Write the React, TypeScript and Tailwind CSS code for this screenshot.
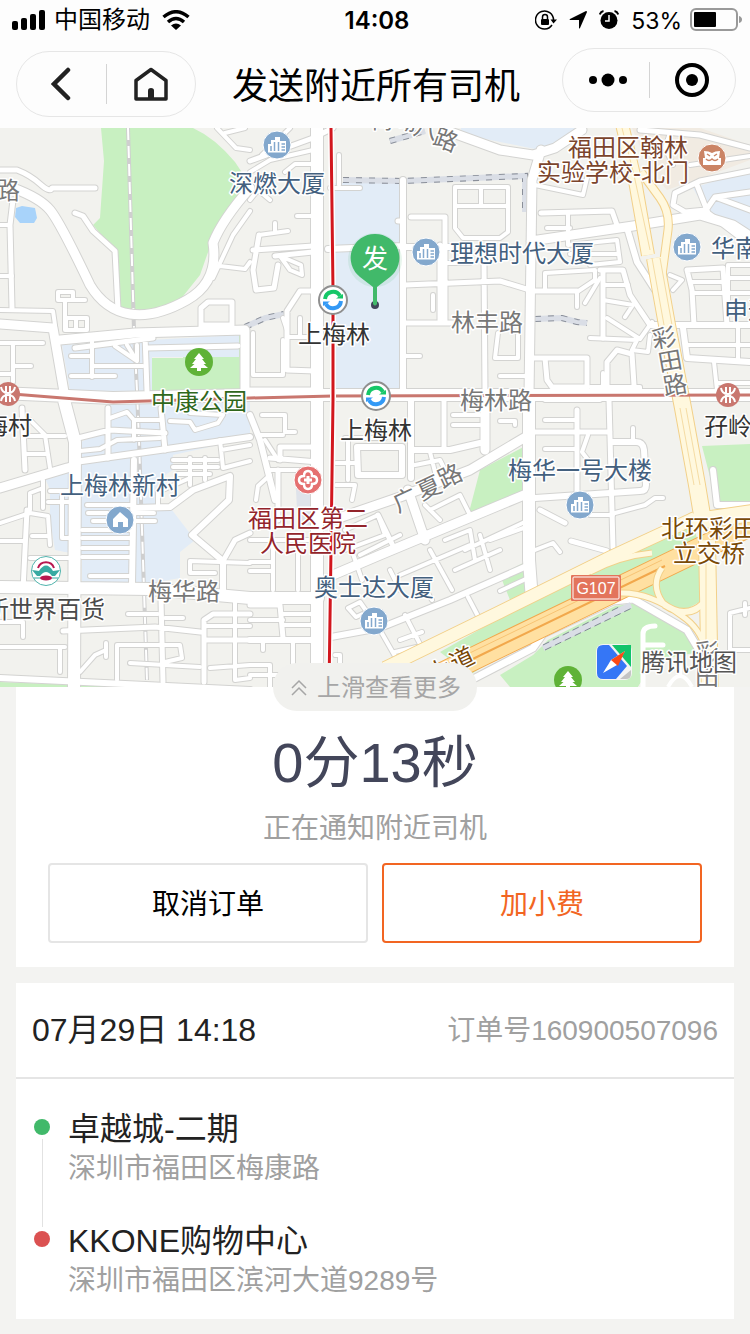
import { ReactNode } from "react";

const FONT = "font-['Liberation_Sans','Noto_Sans_CJK_SC',sans-serif]";

type Road = { w: number; d: string };

// Streets, grouped by width. Casing is drawn first, then the white fill on top.
const streets: Road[] = [
  {
    w: 3,
    d: `M0 225H10M0 276H12M0 310L53 311L55 325M58 292H73V300H58ZM65 300V330M68 300H85M66 328V318H87V330H66M76 318V330
    M0 343H43M13 343V382M13 366H31M0 374H13M71 356H92M92 340V377M71 376H115M92 366H143M115 346L137 361M127 345L137 361V345
    M217 128L236 148L250 150M225 133L245 128M213 278L233 235L250 211M220 266L245 269L250 262
    M250 172L270 160L313 150M262 155L290 128M285 172L295 164H313M339 155V185M330 188H360M297 216H313M250 200L258 190L270 200
    M275 223V232M259 235L288 231M280 256L290 270L302 275L301 265ZM253 333V375H283V340M287 337H312M283 318L287 330M300 318V335
    M30 420L45 435L50 468M25 454H48M25 436H65M80 451L100 449L117 440L160 438M110 418L127 412L134 420V440M170 421L190 422L195 430L218 423L223 415L190 413M134 420H160
    M173 460H218M173 467H218M178 474H210M190 458V485M205 458V480M220 440L223 468L250 461M221 450L250 445M158 505V492L190 478
    M87 505H132M88 513H154M93 521H155M82 530H132M82 538H132M82 548H132M82 557H132M90 576H132M43 480V508M30 510V493L43 488M50 491H70M48 502H70M62 495V538H70
    M0 523L30 513L48 516L50 545M32 536H48M0 541H25M30 558H70M250 563L190 561V573H215
    M128 614H158M165 618H183M206 626H250M80 672L95 655L106 650M106 643V657M117 680V645H180L182 658L165 662M130 663L200 667M0 622H23V637M0 647H65M60 647V672M210 668L250 665M235 600V680L250 678
    M262 415H285V432H295M258 435H283M265 440L278 460M256 500L258 486L270 475M268 470H315M273 545V590M298 550V590M250 562H272M250 571H272M250 540H315
    M283 614H312M283 625H312M250 620H283M293 640V680M263 640V650M250 665H270V688M250 675H318
    M345 438H385M348 438V480M336 463H355M336 485H355L352 500M415 465L440 460L450 480M430 452L437 480M453 415H480M453 425H480
    M345 530L378 515L385 535L345 550M350 545L362 580M360 555L400 535M430 510L460 495L470 515M425 505L440 520
    M430 550L452 590M445 540L470 530L475 560M455 570L500 550M465 550L529 520M480 535L490 570M400 575L470 545M390 570L400 590M420 580L432 600M490 540L529 526
    M348 608L360 602L367 612L356 617ZM380 630L400 665M400 640L422 632M395 652L425 645L480 620L468 597M405 615L422 648M335 655H340V690
    M445 263H470M420 356H403M433 295V310M455 187H508V232L500 238H463L455 228ZM455 206H508M481 187V206M498 333L495 358H518V335M500 376H525M545 400H600
    M535 185L583 195L587 178M547 228H570M568 213V245M568 245L617 240L620 262L590 265M570 254H618M545 291V273L595 270V280L577 292V307M600 278L585 303M590 338L637 340L632 350L648 352L650 335
    M603 300L633 305L625 317M603 285H628M607 318L640 339L652 322M603 373V395M590 387H640V395M690 282H725M692 293H725M730 265H750M730 278H750M730 293H750M728 265V300
    M685 345H750M738 325V360M714 362L717 390M717 383H750M670 275L682 280L673 290M673 165L665 148L670 133M690 165L750 156M545 420H577M545 449H577M588 435L582 452L592 465M633 428V442
    M615 513L645 505L655 498H663M590 515H613M535 550L553 543L560 552M500 591L528 578M730 650V613L750 608M730 650H750M745 603V615M500 421H515V425M702 575L688 590V605`,
  },
  {
    w: 4,
    d: `M0 170H17Q30 175 40 184T52 188H95M75 213L83 216L93 231L115 251L118 310M13 200L10 225L12 308M201 328V308L208 302H232V325H203M75 348L153 338M145 335L147 391M147 348L238 346
    M250 161L313 138L333 128M259 235L253 270L256 290L274 288L278 265M253 250L313 246M275 256L313 252M313 291H300L287 311V370L315 371M250 390H315M411 217H445V320M440 245V320M405 323H455M403 221H398M405 285L500 281L533 291H577
    M484 262L485 392M22 408L25 470M78 438L110 430L165 433M108 408V458M161 408L165 450M27 510L23 590M63 631L155 627L200 632M161 600L163 682M204 682V620L213 614H250M204 640H318
    M280 460V447H317M270 458L318 462M278 470V520M250 605H280L283 638M444 400V448M378 515L395 550M541 213L612 211L618 228M603 270V338M600 270H623L630 295L650 325M545 358H587V387H552L547 380ZM531 358H547M607 385V362L617 350L632 354L634 385
    M687 270L723 268L727 325M687 270L692 290L694 325M697 185L708 213M750 171L700 181L675 193L673 205L685 212L706 210L715 197L750 192M715 197L750 210M708 213L750 245M640 130L700 135L750 148M609 400L613 548M571 541L607 551L609 560M577 410V495M535 432H610
    M540 510L565 523M223 561L235 540L250 533`,
  },
  {
    w: 5,
    d: `M328 249L402 246M404 247H450M627 228L637 262L655 290M650 325H750M683 328L687 358L750 362M713 470L717 505H750M611 442H636Q643 442 644 450L646 485Q646 491 640 491L535 498M135 508L170 507L193 490L230 476L229 500L192 535L223 561V590M134 460L132 585M75 462L160 450L250 437
    M250 415L260 440L275 500M357 447H402V475H358ZM411 400V478M411 450H450L480 443M0 678L250 690M250 640H318M331 637L380 628L450 600L529 565M403 180V393`,
  },
  {
    w: 8,
    d: `M13 188Q40 198 50 210T90 285Q105 310 130 314T187 300T213 243Q222 220 250 188M60 340L135 333L245 330V395M0 324L53 328L64 392M0 488L67 468L75 466M445 130L500 150L533 155L555 148L582 130
    M541 150L532 180L529 395M531 241L633 226L700 215L733 225L750 236M333 520L400 497L470 470L529 435M408 490L425 540M485 395V450M333 575L380 555L440 530L500 505L529 493`,
  },
  { w: 11, d: "M64 400L75 442L74 690M0 587L150 589L250 598H318M0 393L113 398L250 395H750M529 395V560L532 600M317 128V690" },
];

const yellowRoads: Road[] = [
  { w: 5, d: "M662 568Q650 585 663 603Q685 620 703 603Q712 592 708 570M620 593Q650 592 682 616Q700 628 706 650M590 572Q620 556 652 553M664 605Q690 622 706 600" },
  { w: 7, d: "M641 172L660 198Q670 212 668 230L662 275" },
  { w: 12, d: "M622 124L634 175L648 255M385 668L500 612L613 556L695 518" },
  { w: 16, d: "M655 258L667 325L683 408L697 485L702 515M707 540L710 700M690 522L760 512" },
];

const COVERED_WALK = "M343 180L403 181L525 176V212M390 141L425 131M245 327L265 318L284 314M535 319L562 318L577 322L587 323";

function MapText({ x, y, fill, children, rotate = 0, size = 24 }: {
  x: number; y: number; fill: string; children: ReactNode; rotate?: number; size?: number;
}) {
  return (
    <text
      x={x}
      y={y}
      fill={fill}
      fontSize={size}
      textAnchor="middle"
      dominantBaseline="central"
      stroke="#fff"
      strokeWidth={3}
      strokeLinejoin="round"
      paintOrder="stroke"
      transform={rotate ? `rotate(${rotate} ${x} ${y})` : undefined}
    >
      {children}
    </text>
  );
}

function Building({ x, y }: { x: number; y: number }) {
  return (
    <g transform={`translate(${x} ${y})`}>
      <circle r={14} fill="#83a8cd" stroke="#fff" strokeWidth={1} />
      <path d="M-9 7.500V-1H-6V-5H-2V-8H3V-4H9V7.500Z" fill="#fff" />
      <path d="M-6 1V6M-2.500 -3V6M1.500 -3V6M4.500 -1H8M4.500 2H8M4.500 5H8" stroke="#83a8cd" strokeWidth={1.500} />
    </g>
  );
}

function Transfer({ x, y }: { x: number; y: number }) {
  return (
    <g transform={`translate(${x} ${y})`} fill="none">
      <circle r={14} fill="#fff" stroke="#8f8f8f" strokeWidth={2} />
      <path d="M-8 -1A8 8 0 0 1 7 -4" stroke="#16c768" strokeWidth={4} />
      <path d="M3 -1.500H10V-6Z" fill="#16c768" />
      <path d="M8 1A8 8 0 0 1 -7 4" stroke="#3399f5" strokeWidth={4} />
      <path d="M-3 1.500H-10V6Z" fill="#3399f5" />
    </g>
  );
}

function Metro({ x, y }: { x: number; y: number }) {
  return (
    <g transform={`translate(${x} ${y})`}>
      <circle r={12} fill="#c9776f" />
      <path d="M-2 -8V8M2 -8V8M-7 -7Q-6 -1 0 -1T7 -7M-7 7Q-6 1 0 1T7 7" fill="none" stroke="#fff" strokeWidth={2} />
    </g>
  );
}

function Park({ x, y }: { x: number; y: number }) {
  return (
    <g transform={`translate(${x} ${y})`}>
      <circle r={14} fill="#5fb237" />
      <path d="M0 -9L5 -3H3L7 2H4.500L9 6H2V9H-2V6H-9L-4.500 2H-7L-3 -3H-5Z" fill="#fff" />
    </g>
  );
}

function CityMap() {
  return (
    <svg viewBox="0 128 750 559" className="block w-full" role="img" aria-label="地图">
      <rect y={128} width={750} height={560} fill="#f2f2ee" />
      {/* water, blocks and parks */}
      <path fill="#a8d3fa" d="M16 208L22 206L35 208L37 218L34 223H20L15 217Z" />
      <path
        fill="#c8f0c1"
        d="M101 128L104 161L100 218L93 225L115 251L120 310L147 313L180 300L200 275L213 238L240 195L247 180L235 162Q215 138 193 128Z
        M152 358H183V350H213V356H239V335H245V395H152ZM480 470L529 444V493L467 520ZM702 446L750 444V504H717ZM0 682L133 687H0ZM500 575L525 562V598L512 605Z"
      />
      <path
        fill="#e2ecf7"
        d="M62 345L239 335V357H152V391H70ZM330 183H400L402 388H335ZM461 128H582L565 145L540 150L461 134ZM693 188L750 170V238L706 212Z
        M75 445L110 428V400H250V438L173 455V470L165 475L155 508L172 510L195 540L180 552V578L135 586H82V555L65 552L55 550L50 520V490L45 478L75 470Z"
      />
      <path fill="#f1ebe2" d="M632 128H700L750 145V160L710 175L667 190L650 170Z" />
      <path fill="#dfe3ea" d="M295 470H316V530H298Z" />

      {/* overground railway */}
      <path d="M128 128L134 330L137 391L139 440L147 680" fill="none" stroke="#cfcfcf" strokeWidth={4} />
      <path d="M128 128L134 330L137 391L139 440L147 680" fill="none" stroke="#fff" strokeWidth={2} strokeDasharray="12 6" />

      <path d={COVERED_WALK} fill="none" stroke="#dadee6" strokeWidth={6} />
      <path d={COVERED_WALK} fill="none" stroke="#8a8f99" strokeWidth={6} strokeDasharray="6 7" />
      <path d={COVERED_WALK} fill="none" stroke="#dadee6" strokeWidth={4} />

      <g fill="none" strokeLinecap="round" strokeLinejoin="round">
        {streets.map((r) => (
          <path key={r.w} d={r.d} stroke="#d3d3d1" strokeWidth={r.w + 3} />
        ))}
        {streets.map((r) => (
          <path key={r.w} d={r.d} stroke="#fff" strokeWidth={r.w + 1} />
        ))}
      </g>

      {/* highway interchange */}
      <path fill="#c8f0c1" d="M440 652L500 618L693 524L703 560V600L685 610L640 598L615 598L540 630L470 675Z" />
      <path fill="#c8f0c1" d="M500 675L533 655L548 640L615 606L637 603L685 630L700 655L655 660L638 687H510Z" />
      <path d="M655 660L700 652V687H638Z" fill="#f2f2ee" />
      <path d="M420 706L477 677L533 648L543 634L613 601L633 599L687 630L702 655" fill="none" stroke="#d3d3d1" strokeWidth={9} />
      <path d="M420 706L477 677L533 648L543 634L613 601L633 599L687 630L702 655" fill="none" stroke="#fff" strokeWidth={7} />
      <path d="M543 648L631 605" stroke="#dadee6" strokeWidth={6} />
      <path d="M543 645L621 606M545 650L632 608" stroke="#7f8794" strokeWidth={1} strokeDasharray="7 4" />
      <path d="M643 688V634Q643 626 655 626M645 645H663" fill="none" stroke="#fff" strokeWidth={5} strokeLinecap="round" />
      <path d="M668 687Q680 665 692 687M680 660V675" fill="none" stroke="#fff" strokeWidth={4} />

      <g fill="none" strokeLinejoin="round">
        <path d="M385 702L483 654L665 566L760 520" stroke="#f2a84c" strokeWidth={24} />
        <path d="M385 702L483 654L665 566L760 520" stroke="#ffe0a1" strokeWidth={22} />
        <path d="M385 702L483 654L665 566" stroke="#f2a84c" strokeWidth={2} />
        <path d="M382 696L480 648L662 560" stroke="#f7c374" strokeWidth={1} />
        {yellowRoads.map((r) => (
          <path key={r.w} d={r.d} stroke="#f2d089" strokeWidth={r.w + 2} />
        ))}
        {yellowRoads.map((r) => (
          <path key={r.w} d={r.d} stroke="#fff8de" strokeWidth={r.w} />
        ))}
        <path d="M622 128L634 175L650 250M652 258L664 325M660 258L672 325M680 408L694 485M686 408L700 485M706 560V688" stroke="#f5dca4" strokeWidth={1} />
      </g>

      {/* metro lines */}
      <path d="M0 393L113 402L250 398L333 396L750 395" fill="none" stroke="#c9776f" strokeWidth={3} />
      <path d="M331 128L333 290L333 400L331 550L329 687" fill="none" stroke="#fff" strokeWidth={6} />
      <path d="M331 128L333 290L333 400L331 550L329 687" fill="none" stroke="#d2171e" strokeWidth={3} />

      <g className={FONT}>
        <MapText x={8} y={190} fill="#777">路</MapText>
        <MapText x={277} y={183} fill="#43607e">深燃大厦</MapText>
        <MapText x={382} y={119} fill="#777">梅</MapText>
        <MapText x={405} y={121} fill="#777" rotate={8}>坳</MapText>
        <MapText x={426} y={129} fill="#777" rotate={14}>八</MapText>
        <MapText x={446} y={140} fill="#777" rotate={20}>路</MapText>
        <MapText x={628} y={147} fill="#7b442c">福田区翰林</MapText>
        <MapText x={613} y={172} fill="#7b442c">实验学校-北门</MapText>
        <MapText x={522} y={253} fill="#43607e">理想时代大厦</MapText>
        <MapText x={747} y={248} fill="#43607e">华南师</MapText>
        <MapText x={748} y={310} fill="#43607e">申通</MapText>
        <MapText x={334} y={334} fill="#333">上梅林</MapText>
        <MapText x={376} y={430} fill="#333">上梅林</MapText>
        <MapText x={487} y={322} fill="#777">林丰路</MapText>
        <MapText x={496} y={400} fill="#777">梅林路</MapText>
        <MapText x={199} y={401} fill="#2f671c">中康公园</MapText>
        <MapText x={8} y={425} fill="#333">梅村</MapText>
        <MapText x={728} y={426} fill="#333">孖岭</MapText>
        <MapText x={664} y={338} fill="#777" rotate={-10}>彩</MapText>
        <MapText x={670} y={361} fill="#777" rotate={-10}>田</MapText>
        <MapText x={675} y={385} fill="#777" rotate={-10}>路</MapText>
        <MapText x={120} y={485} fill="#43607e">上梅林新村</MapText>
        <MapText x={308} y={518} fill="#93242b">福田区第二</MapText>
        <MapText x={308} y={543} fill="#93242b">人民医院</MapText>
        <MapText x={405} y={500} fill="#777" rotate={-25}>广</MapText>
        <MapText x={429} y={488} fill="#777" rotate={-25}>夏</MapText>
        <MapText x={450} y={476} fill="#777" rotate={-25}>路</MapText>
        <MapText x={580} y={470} fill="#43607e">梅华一号大楼</MapText>
        <MapText x={709} y={528} fill="#7a4a08">北环彩田</MapText>
        <MapText x={709} y={553} fill="#7a4a08">立交桥</MapText>
        <MapText x={184} y={591} fill="#777">梅华路</MapText>
        <MapText x={45} y={609} fill="#4a4a4a">新世界百货</MapText>
        <MapText x={374} y={587} fill="#43607e">奥士达大厦</MapText>
        <MapText x={439} y={671} fill="#7a4a08" rotate={-25}>大</MapText>
        <MapText x={462} y={659} fill="#7a4a08" rotate={-25}>道</MapText>
        <MapText x={707} y={652} fill="#777">彩</MapText>
        <MapText x={707} y={676} fill="#777">田</MapText>
      </g>

      <Building x={277} y={145} />
      <Building x={426} y={252} />
      <Building x={687} y={247} />
      <Building x={580} y={505} />
      <Building x={374} y={621} />
      <Transfer x={333} y={300} />
      <Transfer x={376} y={396} />
      <Metro x={8} y={394} />
      <Metro x={728} y={395} />
      <Park x={199} y={362} />
      <Park x={568} y={680} />

      {/* school */}
      <g transform="translate(712 158)">
        <circle r={14} fill="#cb8465" stroke="#fff" strokeWidth={1} />
        <path d="M-8 -7Q-3 -7 0 -5Q3 -7 8 -7L7 0H9V7H-9V0H-7Z" fill="#fff" />
        <path d="M-5 -4L-2 -2M5 -4L2 -2M-6 1Q-3 4 0 1Q3 4 6 1" stroke="#cb8465" strokeWidth={1.500} fill="none" />
      </g>
      {/* housing estate */}
      <g transform="translate(120 520)">
        <circle r={14} fill="#83a8cd" stroke="#fff" strokeWidth={1} />
        <path d="M0 -8L8 -1V7H3V2H-2V7H-7V-1Z" fill="#fff" />
      </g>
      {/* hospital */}
      <g transform="translate(308 480)">
        <circle r={14} fill="#e57070" stroke="#fff" strokeWidth={1} />
        <path d="M-4 -4Q-4 -9 0 -9T4 -4Q9 -4 9 0T4 4Q4 9 0 9T-4 4Q-9 4 -9 0T-4 -4Z" fill="none" stroke="#fff" strokeWidth={2.500} />
        <path d="M0 -4V4M-4 0H4" stroke="#fff" strokeWidth={3} />
      </g>
      {/* department store */}
      <g transform="translate(46 571)">
        <circle r={14.500} fill="#fff" stroke="#4fb3ac" strokeWidth={1} />
        <path d="M-8 -3A8.500 8.500 0 0 1 8 -3" fill="none" stroke="#b8174f" strokeWidth={2} />
        <path d="M-14 -1L-7 0Q0 -11 7 0L14 -1L9 5H6Q0 -3 -6 5H-9Z" fill="#38aaa2" />
        <ellipse cy={7} rx={6} ry={2.500} fill="#b8174f" />
        <path d="M-12 7H-6M6 7H12" stroke="#38aaa2" />
      </g>

      <g transform="translate(571 575)">
        <rect width={50} height={26} rx={1} fill="#e3745b" />
        <rect x={2} y={2} width={46} height={22} rx={1} fill="none" stroke="#fff" />
        <text x={25} y={13} fill="#fff" fontSize={16} textAnchor="middle" dominantBaseline="central" className={FONT}>G107</text>
      </g>

      {/* map provider */}
      <g transform="translate(596 644)">
        <rect width={36} height={36} rx={7} fill="#f4f4f4" />
        <path d="M7 1H13L31 22L20 35H7Q1 35 1 29V7Q1 1 7 1Z" fill="#3576f6" />
        <path d="M16 1H35V23Z" fill="#12c46b" />
        <path d="M35 26V30Q35 35 30 35H24Z" fill="#c4c4c4" />
        <path d="M29 7L15 16L7 29L21 21Z" fill="#fff" />
        <path d="M29 7L15 16L22 22Z" fill="#fb4a16" />
      </g>
      <g className={FONT}>
        <MapText x={689} y={662} fill="#555">腾讯地图</MapText>
      </g>

      {/* pickup pin */}
      <circle cx={375} cy={305} r={4} fill="#3f4459" />
      <circle cx={375} cy={260} r={27} fill="#41b96a" opacity={0.120} />
      <path d="M375 234A24 24 0 0 1 390 277L377 287V304Q375 307 373 304V287L360 277A24 24 0 0 1 375 234Z" fill="#41b96a" />
      <text x={375} y={259} fill="#fff" fontSize={26} textAnchor="middle" dominantBaseline="central" className={FONT}>发</text>
    </svg>
  );
}

function StatusBar() {
  return (
    <div className="grid h-10 grid-cols-[1fr_auto_1fr] items-center pr-2 pl-3 text-2xl text-black">
      <div className="flex items-center gap-2">
        <svg viewBox="0 0 34 20" className="h-5 w-[34px]" aria-hidden="true">
          <rect y="11" width="6" height="9" rx="2" />
          <rect x="9" y="8" width="6" height="12" rx="2" />
          <rect x="18" y="4" width="6" height="16" rx="2" />
          <rect x="27" width="6" height="20" rx="2" />
        </svg>
        <span>中国移动</span>
        <svg viewBox="0 0 28 20" className="ml-1 h-5 w-7" fill="none" stroke="currentColor" strokeWidth="3.500" aria-hidden="true">
          <path d="M1.500 7Q14 -3.500 26.500 7M6 12Q14 5 22 12" />
          <path d="M9 15.500Q14 11.500 19 15.500L14 20Z" fill="currentColor" stroke="none" />
        </svg>
      </div>
      <span className="pt-0.5 font-['Inter',sans-serif] font-semibold">14:08</span>
      <div className="flex items-center justify-end">
        <svg viewBox="0 0 22 20" className="mr-3 h-5 w-[22px]" fill="none" stroke="currentColor" strokeWidth="1.500" aria-hidden="true">
          <path d="M17 15A9 9 0 1 1 18.500 10" />
          <path d="M15.500 9.500H22L18.500 13.500Z" fill="currentColor" stroke="none" />
          <rect x="6" y="9" width="8" height="6" rx="1" fill="currentColor" stroke="none" />
          <path d="M7.500 9V7A2.500 2.500 0 0 1 12.500 7V9" />
        </svg>
        <svg viewBox="0 0 18 18" className="mr-3 size-[18px]" aria-hidden="true">
          <path d="M17 0Q18 0 18 1L11 17Q10 18 10 17V9H1Q0 8.500 1 8Z" />
        </svg>
        <svg viewBox="0 0 20 20" className="mr-3 size-5" aria-hidden="true">
          <circle cx="10" cy="10.500" r="8.500" />
          <path d="M10 5V11H6" fill="none" stroke="#fff" strokeWidth="1.500" />
          <path d="M.8 4.500Q1.500 1.500 4.500 1M19.200 4.500Q18.500 1.500 15.500 1" fill="none" stroke="currentColor" strokeWidth="2" />
        </svg>
        <span className="mr-2 pt-0.5 font-['Inter',sans-serif] text-[23px]">53%</span>
        <svg viewBox="0 0 52 24" className="h-6 w-[52px]" aria-hidden="true">
          <rect x="1" y="1" width="46" height="21" rx="5" fill="none" stroke="#999" strokeWidth="2" />
          <rect x="4" y="4" width="22" height="15" rx="1" />
          <path d="M49 8Q52 9 52 11.500T49 15Z" fill="#999" />
        </svg>
      </div>
    </div>
  );
}

function NavBar() {
  return (
    <header className="grid h-[88px] grid-cols-[1fr_auto_1fr] items-center pr-3.5 pl-4">
      <div className="flex h-[66px] w-[180px] items-center justify-self-start rounded-full border border-[#e6e6e6]">
        <button type="button" aria-label="返回" className="flex flex-1 justify-center">
          <svg viewBox="0 0 20 34" className="h-[34px] w-5" fill="none" stroke="#222" strokeWidth="4.500" strokeLinecap="round">
            <path d="M17 3L3 17L17 31" />
          </svg>
        </button>
        <span className="h-10 w-px bg-[#d4d4d4]" />
        <button type="button" aria-label="首页" className="flex flex-1 justify-center">
          <svg viewBox="0 0 34 34" className="size-[34px]" fill="none" stroke="#222" strokeWidth="3.500" strokeLinejoin="round">
            <path d="M2 13.500L17 2.500L32 13.500V32H2Z" />
            <path d="M14 32V23.500Q14 21 17 21T20 23.500V32Z" fill="#222" stroke="none" />
          </svg>
        </button>
      </div>
      <h1 className="pt-1.5 text-4xl text-black">发送附近所有司机</h1>
      <div className="justify-self-end pb-2">
        <div className="flex h-16 w-[174px] items-center rounded-full border border-[#e6e6e6]">
          <button type="button" aria-label="更多" className="flex flex-1 justify-center">
            <svg viewBox="0 0 38 14" className="ml-1 h-[14px] w-[38px]">
              <circle cx="4" cy="7" r="4" />
              <circle cx="19" cy="7" r="6.500" />
              <circle cx="34" cy="7" r="4" />
            </svg>
          </button>
          <span className="h-9 w-px bg-[#d4d4d4]" />
          <button type="button" aria-label="关闭" className="flex flex-1 justify-center">
            <svg viewBox="0 0 34 34" className="size-[34px]">
              <circle cx="17" cy="17" r="15" fill="none" stroke="#000" strokeWidth="4" />
              <circle cx="17" cy="17" r="6" />
            </svg>
          </button>
        </div>
      </div>
    </header>
  );
}

const stops = [
  { name: "卓越城-二期", address: "深圳市福田区梅康路", dot: "bg-[#41b96a]", top: "bg-transparent", bottom: "bg-[#e2e2e2]", pad: "pt-0.5 pb-[30px]" },
  { name: "KKONE购物中心", address: "深圳市福田区滨河大道9289号", dot: "bg-[#db5151]", top: "bg-[#e2e2e2]", bottom: "bg-transparent", pad: "pt-0.5" },
];

export default function App() {
  return (
    <div className={`min-h-screen bg-[#f3f3f1] pb-3 ${FONT}`}>
      <div className="bg-[#fdfdfd]">
        <StatusBar />
        <NavBar />
      </div>
      <CityMap />

      <main className="px-4">
        <section className="bg-white px-8 pb-6 text-center">
          <button type="button" className="relative mx-auto -mt-6 flex h-12 items-center gap-2 rounded-full bg-[#f1f1ee] px-4 pt-0.5 text-2xl text-[#a6a6a6]">
            <svg viewBox="0 0 20 20" className="size-5" fill="none" stroke="currentColor" strokeWidth="1.500">
              <path d="M3 10L10 3L17 10M3 17L10 10L17 17" />
            </svg>
            上滑查看更多
          </button>
          <p className="mt-5 text-[56px] leading-[64px] text-[#43465a]">0分13秒</p>
          <p className="mt-3 text-[28px] leading-[44px] text-[#a0a0a0]">正在通知附近司机</p>
          <div className="mt-3 grid grid-cols-2 gap-[14px] text-[28px]">
            <button type="button" className="h-20 rounded-sm border-2 border-[#e5e5e5] pt-1 text-black">取消订单</button>
            <button type="button" className="h-20 rounded-sm border-2 border-[#f26522] pt-1 text-[#f26522]">加小费</button>
          </div>
        </section>

        <section className="mt-4 bg-white">
          <div className="flex h-24 items-center justify-between border-b-2 border-[#e5e5e5] px-4">
            <h2 className="text-[32px] text-[#222]">07月29日 14:18</h2>
            <span className="pt-0.5 text-[28px] text-[#a0a0a0]">订单号160900507096</span>
          </div>
          <ol className="px-[18px] pt-7 pb-[18px]">
            {stops.map((stop) => (
              <li key={stop.name} className="flex gap-[18px]">
                <div className="flex w-4 flex-col items-center gap-1">
                  <span className={`h-2 w-px ${stop.top}`} />
                  <span className={`size-4 rounded-full ${stop.dot}`} />
                  <span className={`w-px flex-1 ${stop.bottom}`} />
                </div>
                <div className={stop.pad}>
                  <p className="text-[32px] leading-10 text-[#222]">{stop.name}</p>
                  <p className="text-[28px] leading-10 text-[#a0a0a0]">{stop.address}</p>
                </div>
              </li>
            ))}
          </ol>
        </section>
      </main>
    </div>
  );
}
